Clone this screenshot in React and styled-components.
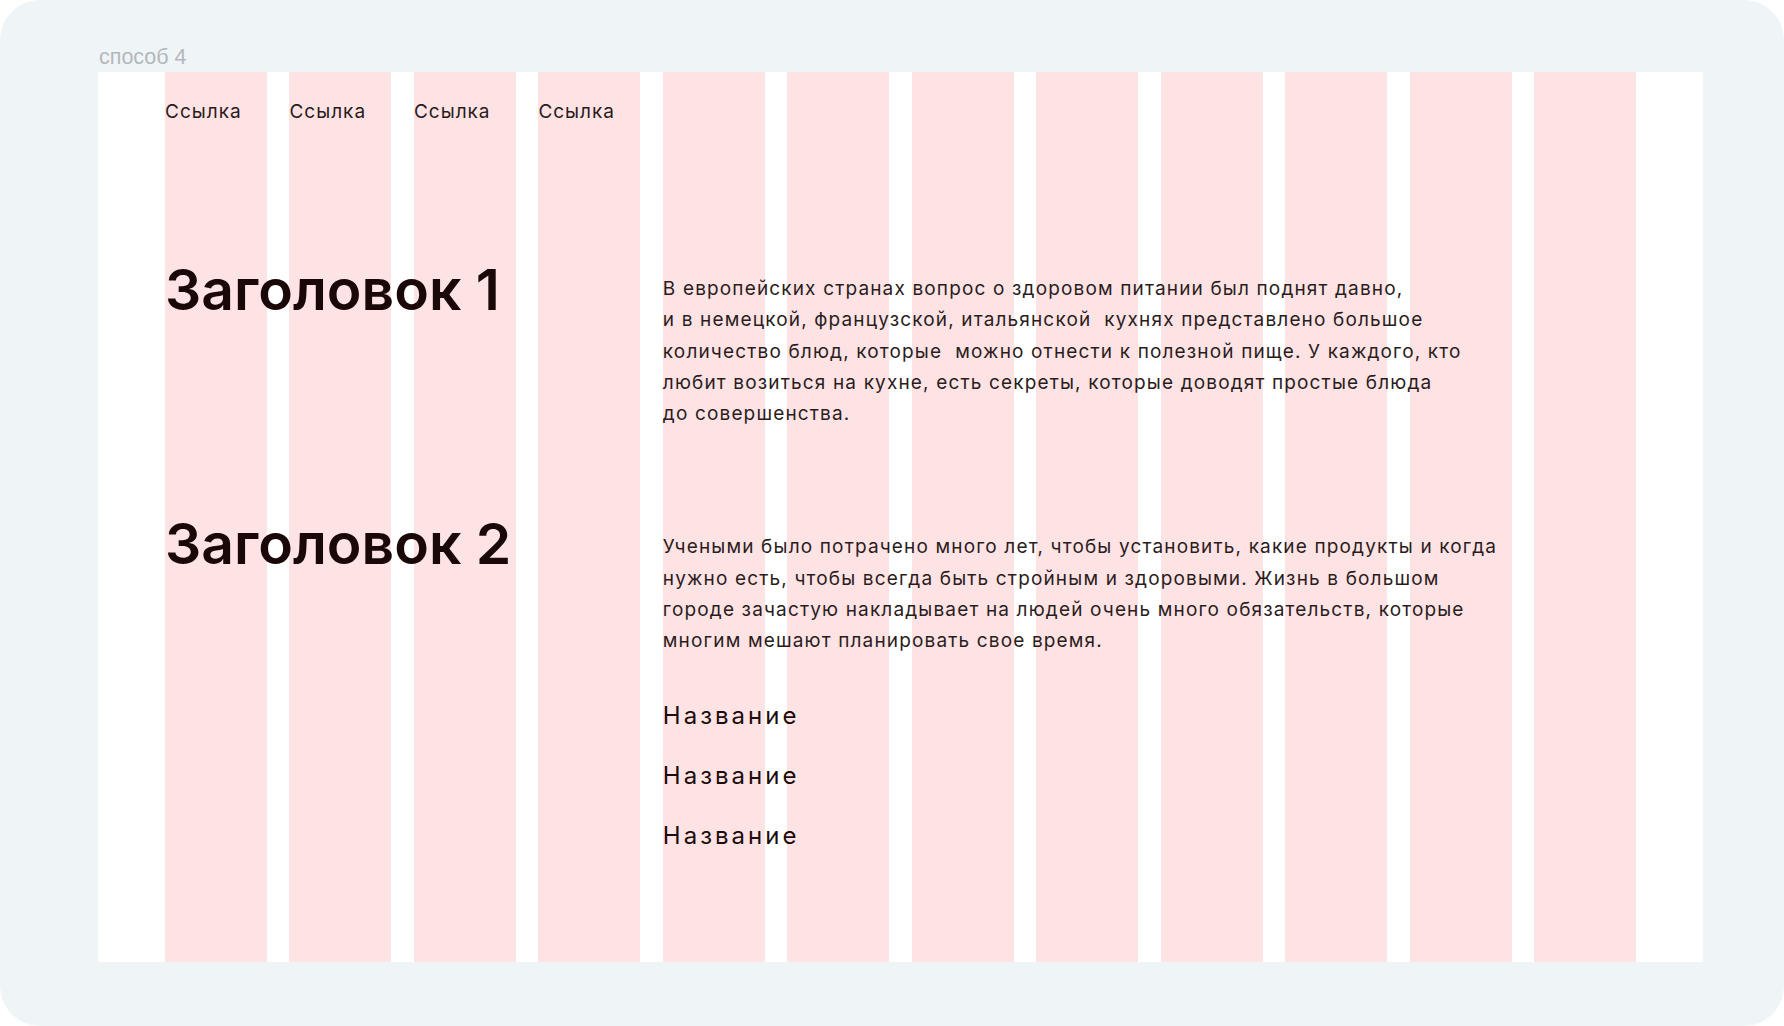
import React from "react";
import styled, { createGlobalStyle } from "styled-components";

const GlobalStyle = createGlobalStyle`
  html, body {
    margin: 0;
    padding: 0;
    background: #ffffff;
  }
  body {
    font-family: "Inter", "Noto Sans", sans-serif;
  }
`;

const Board = styled.div`
  width: 1784px;
  height: 1026px;
  box-sizing: border-box;
  background: #eff4f7;
  border-radius: 40px;
  padding: 43px 81px 0 98px;
  display: flex;
  flex-direction: column;
`;

const Label = styled.div`
  font-family: "Liberation Sans", Arial, sans-serif;
  font-size: 21.5px;
  line-height: 29px;
  color: #b3b8bc;
  margin-left: 1px;
`;

const Frame = styled.div`
  width: 1605px;
  height: 890px;
  box-sizing: border-box;
  background: #ffffff;
  padding: 0 67px 0 67px;
  display: grid;
  grid-template-columns: repeat(12, 1fr);
  grid-template-rows: auto auto auto 1fr;
  column-gap: 22.5px;
  color: #1d0c0c;
`;

const Column = styled.div`
  grid-row: 1 / -1;
  grid-column: ${(p) => p.$n};
  background: #fee3e5;
`;

const Nav = styled.nav`
  grid-row: 1;
  grid-column: 1 / 5;
  display: grid;
  grid-template-columns: subgrid;
  padding-top: 28px;
`;

const NavLink = styled.a`
  font-size: 19px;
  line-height: 24px;
  color: #2a1a1a;
  text-decoration: none;
  letter-spacing: 1px;
`;

const Heading = styled.h2`
  grid-row: ${(p) => p.$row};
  grid-column: 1 / 5;
  margin: ${(p) => p.$top}px 0 0 0;
  font-size: 57px;
  line-height: 68px;
  font-weight: 600;
  color: #1a0808;
  align-self: start;
`;

const Text = styled.p`
  grid-row: ${(p) => p.$row};
  grid-column: 5 / 13;
  margin: ${(p) => p.$top}px 0 0 0;
  font-size: 19px;
  line-height: 31.3px;
  color: #2b1c1c;
  letter-spacing: 1.15px;
  align-self: start;
`;

const NameList = styled.ul`
  grid-row: 4;
  grid-column: 5 / 13;
  list-style: none;
  margin: 44px 0 0 0;
  padding: 0;
  display: flex;
  flex-direction: column;
  gap: 30px;
  align-self: start;
`;

const Name = styled.li`
  font-size: 24px;
  line-height: 30px;
  color: #1d0c0c;
  letter-spacing: 3px;
`;

const links = ["Ссылка", "Ссылка", "Ссылка", "Ссылка"];

export default function App() {
  return (
    <>
      <GlobalStyle />
      <Board>
        <Label>способ 4</Label>
        <Frame>
          {Array.from({ length: 12 }, (_, i) => (
            <Column key={i} $n={i + 1} />
          ))}
          <Nav>
            {links.map((l, i) => (
              <NavLink key={i} href="#">
                {l}
              </NavLink>
            ))}
          </Nav>

          <Heading $row={2} $top={132}>Заголовок 1</Heading>
          <Text $row={2} $top={149}>
            В европейских странах вопрос о здоровом питании был поднят давно,
            <br />и в немецкой, французской, итальянской&nbsp; кухнях представлено большое
            <br />
            количество блюд, которые&nbsp; можно отнести к полезной пище. У каждого, кто
            <br />
            любит возиться на кухне, есть секреты, которые доводят простые блюда
            <br />
            до совершенства.
          </Text>

          <Heading $row={3} $top={81}>Заголовок 2</Heading>
          <Text $row={3} $top={102}>
            Учеными было потрачено много лет, чтобы установить, какие продукты и когда
            <br />
            нужно есть, чтобы всегда быть стройным и здоровыми. Жизнь в большом
            <br />
            городе зачастую накладывает на людей очень много обязательств, которые
            <br />
            многим мешают планировать свое время.
          </Text>

          <NameList>
            <Name>Название</Name>
            <Name>Название</Name>
            <Name>Название</Name>
          </NameList>
        </Frame>
      </Board>
    </>
  );
}
